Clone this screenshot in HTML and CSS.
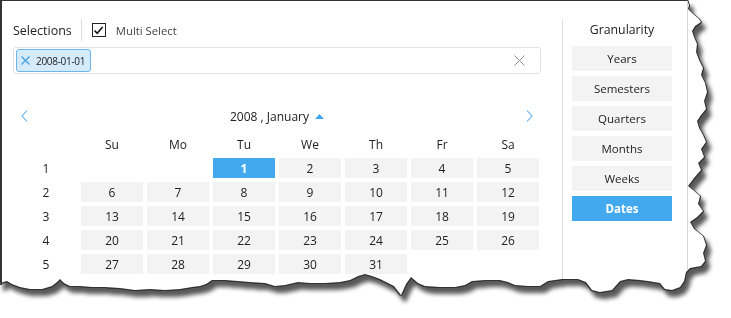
FILE: index.html
```html
<!DOCTYPE html>
<html lang="en">
<head>
<meta charset="UTF-8">
<title>Date selector</title>
<link rel="stylesheet" href="styles.css">
</head>
<body>
<div class="sheet">
  <div class="window">
    <div class="control">
      <div class="selector">
        <div class="sel-head">
          <span class="sel-title">Selections</span>
          <span class="sep"></span>
          <span class="check">
            <svg width="11" height="11" viewBox="0 0 11 11"><path d="M1.5 5.5 L4.2 8.3 L9.6 2" fill="none" stroke="#111" stroke-width="1.6"/></svg>
          </span>
          <span class="multi">Multi Select</span>
        </div>

        <div class="tagbox">
          <span class="tag">
            <svg class="tag-x" width="9" height="9" viewBox="0 0 9 9"><path d="M0.5 0.5 L8.5 8.5 M8.5 0.5 L0.5 8.5" stroke="#3d9be0" stroke-width="1.1"/></svg>
            2008-01-01
          </span>
          <svg class="clear" width="11" height="11" viewBox="0 0 11 11"><path d="M0.5 0.5 L10.5 10.5 M10.5 0.5 L0.5 10.5" stroke="#8a8a8a" stroke-width="1"/></svg>
        </div>

        <div class="cal-nav">
          <svg width="7" height="12" viewBox="0 0 7 12"><path d="M6 0.5 L1 6 L6 11.5" fill="none" stroke="#5aaeee" stroke-width="1.1"/></svg>
          <div class="cal-title">2008 , January
            <svg class="tri" width="9" height="5" viewBox="0 0 9 5"><path d="M0 5 L4.5 0 L9 5 Z" fill="#3ea6ee"/></svg>
          </div>
          <svg width="7" height="12" viewBox="0 0 7 12"><path d="M1 0.5 L6 6 L1 11.5" fill="none" stroke="#5aaeee" stroke-width="1.1"/></svg>
        </div>

        <div class="cal-grid">
          <div class="hd"></div><div class="hd">Su</div><div class="hd">Mo</div><div class="hd">Tu</div><div class="hd">We</div><div class="hd">Th</div><div class="hd">Fr</div><div class="hd">Sa</div>

          <div class="wk">1</div><div></div><div></div><div class="day sel">1</div><div class="day">2</div><div class="day">3</div><div class="day">4</div><div class="day">5</div>
          <div class="wk">2</div><div class="day">6</div><div class="day">7</div><div class="day">8</div><div class="day">9</div><div class="day">10</div><div class="day">11</div><div class="day">12</div>
          <div class="wk">3</div><div class="day">13</div><div class="day">14</div><div class="day">15</div><div class="day">16</div><div class="day">17</div><div class="day">18</div><div class="day">19</div>
          <div class="wk">4</div><div class="day">20</div><div class="day">21</div><div class="day">22</div><div class="day">23</div><div class="day">24</div><div class="day">25</div><div class="day">26</div>
          <div class="wk">5</div><div class="day">27</div><div class="day">28</div><div class="day">29</div><div class="day">30</div><div class="day">31</div><div></div><div></div>
        </div>
      </div>

      <div class="granularity">
        <div class="gr-title">Granularity</div>
        <div class="gr-btn">Years</div>
        <div class="gr-btn">Semesters</div>
        <div class="gr-btn">Quarters</div>
        <div class="gr-btn">Months</div>
        <div class="gr-btn">Weeks</div>
        <div class="gr-btn active">Dates</div>
      </div>
    </div>
  </div>
</div>
</body>
</html>
```

FILE: styles.css
```css
body {
	margin: 0;
	background: #fff;
	font-family: "Open Sans", "Noto Sans", sans-serif;
	color: #222;
}

/* torn paper outline + shadow */
.sheet {
	width: 720px;
	height: 305px;
	filter: drop-shadow(1px 0 0 #333) drop-shadow(0 1px 0 #333) drop-shadow(-1px 0 0 #333) drop-shadow(4px 6px 2px rgba(0, 0, 0, 0.65));
}
.window {
	width: 710px;
	height: 300px;
	box-sizing: border-box;
	background: #fff;
	border-top: 1px solid #333;
	border-left: 2px solid #333;
	clip-path: polygon(0 0, 687px 0, 689px 5px, 688px 9px, 692px 13px, 699px 19px, 701px 22px, 695px 26px, 692px 31px, 694px 37px, 697px 44px, 696px 52px, 699px 60px, 703px 68px, 701px 75px, 705px 83px, 707px 92px, 704px 101px, 706px 109px, 701px 115px, 697px 121px, 699px 128px, 703px 135px, 706px 142px, 701px 149px, 704px 157px, 698px 163px, 701px 170px, 694px 178px, 688px 186px, 693px 190px, 700px 196px, 698px 204px, 703px 211px, 697px 217px, 690px 222px, 694px 229px, 703px 236px, 706px 245px, 703px 253px, 705px 261px, 701px 266px, 690px 268px, 686px 272px, 684px 281px, 680px 287px, 672px 290px, 665px 289px, 660px 283px, 648px 281px, 640px 280px, 628px 279px, 620px 281px, 612px 290px, 600px 292px, 592px 290px, 586px 282px, 578px 279px, 562px 279px, 548px 281px, 540px 286px, 528px 286px, 515px 285px, 508px 282px, 500px 280px, 485px 280px, 472px 281px, 465px 285px, 455px 287px, 440px 287px, 425px 286px, 418px 283px, 411px 277px, 406px 284px, 401px 295px, 394px 286px, 388px 283px, 380px 279px, 372px 276px, 365px 274px, 358px 276px, 350px 280px, 340px 282px, 325px 283px, 310px 283px, 298px 282px, 285px 285px, 275px 286px, 265px 283px, 250px 282px, 238px 281px, 225px 280px, 212px 280px, 206px 284px, 200px 286px, 192px 287px, 180px 289px, 165px 290px, 150px 289px, 135px 290px, 120px 288px, 105px 287px, 92px 287px, 80px 286px, 70px 286px, 64px 283px, 60px 279px, 57px 282px, 52px 286px, 42px 289px, 30px 289px, 20px 287px, 12px 284px, 7px 281px, 3px 282px, 0 284px);
}

.control {
	display: flex;
	width: 686px;
	height: 299px;
	box-sizing: border-box;
	padding-top: 18px;
	border-right: 1px solid #d6d6d6;
}

/* left part: selections + calendar */
.selector {
	width: 560px;
	padding-left: 11px;
	box-sizing: border-box;
}
.sel-head {
	display: flex;
	align-items: center;
	height: 22px;
}
.sel-title {
	font-size: 12.5px;
	color: #222;
}
.sep {
	width: 1px;
	height: 22px;
	background: #dedede;
	margin-left: 9px;
	margin-right: 10px;
}
.check {
	display: flex;
	align-items: center;
	justify-content: center;
	width: 12px;
	height: 12px;
	border: 1px solid #222;
}
.multi {
	margin-left: 10px;
	font-size: 11.3px;
	color: #444;
}

.tagbox {
	display: flex;
	align-items: center;
	justify-content: space-between;
	width: 528px;
	height: 27px;
	margin-top: 6px;
	padding: 0 15px 0 2px;
	box-sizing: border-box;
	border: 1px solid #e2e2e2;
	border-radius: 3px;
}
.tag {
	display: flex;
	align-items: center;
	gap: 6px;
	height: 23px;
	padding: 0 5px 0 4px;
	box-sizing: border-box;
	background: #d5eafa;
	border: 1px solid #6db6ec;
	border-radius: 3px;
	font-size: 10px;
	letter-spacing: -0.3px;
	color: #222;
}

.cal-nav {
	display: flex;
	align-items: center;
	justify-content: space-between;
	width: 524px;
	height: 20px;
	margin: 32px 0 8px 2px;
	padding: 0 6px;
	box-sizing: border-box;
}
.cal-title {
	display: flex;
	align-items: center;
	gap: 6px;
	font-size: 12px;
	color: #222;
}

.cal-grid {
	display: grid;
	grid-template-columns: repeat(8, 62px);
	grid-auto-rows: 20px;
	gap: 4px;
	margin-left: 2px;
	font-size: 12px;
}
.cal-grid > div {
	display: flex;
	align-items: center;
	justify-content: center;
}
.day {
	background: #f3f3f3;
	color: #222;
}
.day.sel {
	background: #42a9ef;
	color: #fff;
	font-weight: bold;
}

/* right part: granularity buttons */
.granularity {
	display: flex;
	flex-direction: column;
	gap: 5px;
	padding-left: 9px;
	border-left: 1px solid #dedede;
}
.gr-title {
	width: 100px;
	height: 22px;
	line-height: 22px;
	text-align: center;
	font-size: 12.3px;
	color: #222;
}
.gr-btn {
	width: 100px;
	height: 25px;
	line-height: 25px;
	text-align: center;
	background: #f3f3f3;
	font-size: 11.5px;
	color: #222;
}
.gr-btn.active {
	background: #42a9ef;
	color: #fff;
	font-weight: bold;
}
```
